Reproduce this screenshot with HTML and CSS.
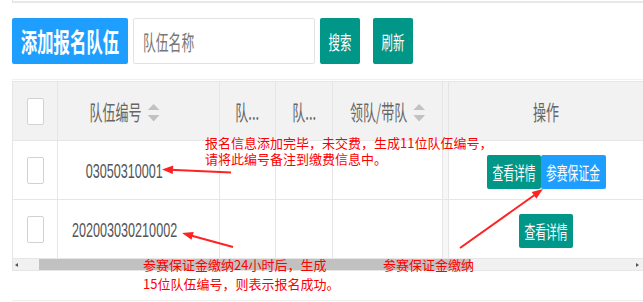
FILE: index.html
```html
<!DOCTYPE html>
<html lang="zh-CN">
<head>
    <meta charset="UTF-8">
    <title>报名队伍</title>
    <link rel="stylesheet" href="styles.css">
</head>
<body>
    <div class="page">
        <div class="top-rule"></div>

        <div class="toolbar">
            <button class="btn blue add"><span class="sq">添加报名队伍</span></button>
            <div class="search-box"><span class="sq">队伍名称</span></div>
            <button class="btn teal tool"><span class="sq">搜索</span></button>
            <button class="btn teal tool refresh"><span class="sq">刷新</span></button>
        </div>

        <div class="table">
            <div class="grid">
                <!-- 表头 -->
                <div class="cell head"><i class="cb"></i></div>
                <div class="cell head num">
                    <span class="sq">队伍编号<svg class="sort" viewBox="0 0 19 18"><path d="M0 6 9.5 0 19 6Z"/><path d="M0 11h19l-9.5 6.5Z"/></svg></span>
                </div>
                <div class="cell head"><span class="sq">队...</span></div>
                <div class="cell head"><span class="sq">队...</span></div>
                <div class="cell head">
                    <span class="sq">领队/带队<svg class="sort" viewBox="0 0 19 18"><path d="M0 6 9.5 0 19 6Z"/><path d="M0 11h19l-9.5 6.5Z"/></svg></span>
                </div>
                <div class="cell head ops"><span class="sq">操作</span></div>

                <!-- 第一行 -->
                <div class="cell"><i class="cb"></i></div>
                <div class="cell num"><span class="sq digits">03050310001</span></div>
                <div class="cell"></div>
                <div class="cell"></div>
                <div class="cell"></div>
                <div class="cell ops">
                    <button class="btn teal sm detail"><span class="sq">查看详情</span></button>
                    <button class="btn blue sm deposit"><span class="sq">参赛保证金</span></button>
                </div>

                <!-- 第二行 -->
                <div class="cell"><i class="cb"></i></div>
                <div class="cell num"><span class="sq digits">202003030210002</span></div>
                <div class="cell"></div>
                <div class="cell"></div>
                <div class="cell"></div>
                <div class="cell ops">
                    <button class="btn teal sm detail"><span class="sq">查看详情</span></button>
                </div>
            </div>

            <div class="hscroll">
                <div class="arrow-l"><i></i></div>
                <div class="thumb"></div>
                <div class="track"></div>
                <div class="arrow-r"><i></i></div>
            </div>
        </div>

        <div class="bottom-rule"></div>

        <!-- 标注 -->
        <div class="note note-1">报名信息添加完毕，未交费，生成11位队伍编号，<br>请将此编号备注到缴费信息中。</div>
        <div class="note note-2">参赛保证金缴纳24小时后，生成<br>15位队伍编号，则表示报名成功。</div>
        <div class="note note-3">参赛保证金缴纳</div>

        <svg class="arrows" viewBox="0 0 643 302">
            <line x1="231" y1="172.5" x2="170" y2="169.8"/>
            <polygon points="162,169.5 173.2,165.6 172.8,174"/>
            <line x1="233" y1="247" x2="190" y2="235.3"/>
            <polygon points="182,233 193.7,232 191.5,239.8"/>
            <line x1="460" y1="248" x2="536" y2="194"/>
            <polygon points="543,189 536.3,198.7 531.7,192.1"/>
        </svg>
    </div>
</body>
</html>
```

FILE: styles.css
```css
* {
    box-sizing: border-box;
}

body {
    margin: 0;
    background: #fff;
    font-family: "Noto Sans CJK SC", "Noto Sans", sans-serif;
    color: #666;
}

.page {
    position: relative;
    width: 643px;
    height: 302px;
    padding-left: 12px;
    overflow: hidden;
}

.top-rule {
    height: 3px;
    border-left: 1px solid #e2e2e2;
    border-bottom: 2px solid #e8e8e8;
}

/* 截图里界面文字被横向压扁，这里统一用 scaleX 还原 */
.sq {
    display: inline-block;
    flex-shrink: 0;
    white-space: nowrap;
    line-height: 1;
    transform: scaleX(.62);
}

.btn {
    display: flex;
    align-items: center;
    justify-content: center;
    padding: 0;
    border: 0;
    border-radius: 2px;
    color: #fff;
    font-family: inherit;
    overflow: visible;
}

.blue {
    background: #1e9fff;
}

.teal {
    background: #009688;
}

.toolbar {
    display: flex;
    height: 77px;
    padding: 15px 0;
    border-bottom: 1px solid #f0f0f0;
}

.add {
    width: 116px;
    font-size: 26px;
    font-weight: bold;
}

.add .sq {
    transform: scaleX(.63);
}

.search-box {
    display: flex;
    align-items: center;
    width: 182px;
    margin-left: 5px;
    padding-left: 9px;
    border: 1px solid #e2e2e2;
    border-radius: 2px;
    font-size: 21px;
    color: #777;
}

.search-box .sq {
    transform-origin: left center;
    transform: scaleX(.61);
}

.tool {
    width: 40px;
    margin-left: 5px;
    font-size: 19px;
}

.tool .sq {
    transform: scaleX(.6);
}

.refresh {
    margin-left: 13px;
}

.table {
    margin-top: 1px;
    border: 1px solid #e6e6e6;
    border-right: 0;
}

.grid {
    display: grid;
    grid-template-columns: 45px 162px 56px 57px 110px 1fr;
    grid-template-rows: 59px 59px 59px;
}

.cell {
    display: flex;
    align-items: center;
    justify-content: center;
    border-right: 1px solid #e6e6e6;
    border-bottom: 1px solid #e6e6e6;
    font-size: 21px;
}

.head {
    background: #f2f2f2;
}

.num {
    padding-right: 28px;
}

.digits {
    font-family: "Liberation Sans", Arial, sans-serif;
    color: #555;
    transform: scaleX(.6);
}

.ops {
    padding: 3px 0 0 6px;
    border-right: 0;
    box-shadow: inset 5px 0 0 #f7f7f7, inset 6px 0 0 #e6e6e6;
}

.head.ops {
    padding-top: 0;
    box-shadow: inset 5px 0 0 #f2f2f2, inset 6px 0 0 #e4e4e4;
}

.cb {
    display: block;
    width: 17px;
    height: 27px;
    background: #fff;
    border: 1px solid #d2d2d2;
    border-radius: 2px;
}

.sort {
    width: 19px;
    height: 18px;
    margin-left: 10px;
    vertical-align: -2px;
    fill: #c2c2c2;
}

.sm {
    height: 34px;
    font-size: 18px;
}

.sm .sq {
    transform: scaleX(.6);
}

.detail {
    width: 54px;
}

.deposit {
    width: 65px;
}

.hscroll {
    display: flex;
    height: 11px;
    background: #f1f1f1;
}

.arrow-l,
.arrow-r {
    display: flex;
    align-items: center;
}

.arrow-l {
    width: 26px;
    padding-left: 2px;
}

.arrow-l i {
    border-right: 3px solid #555;
    border-top: 2px solid transparent;
    border-bottom: 2px solid transparent;
}

.arrow-r {
    width: 7px;
}

.arrow-r i {
    border-left: 3px solid #555;
    border-top: 2px solid transparent;
    border-bottom: 2px solid transparent;
}

.thumb {
    width: 432px;
    background: #c1c1c1;
}

.track {
    flex: 1;
}

.bottom-rule {
    margin-top: 29px;
    border-top: 1px solid #eee;
}

.note {
    position: absolute;
    color: #f00;
    font-size: 13px;
    line-height: 16px;
    white-space: nowrap;
}

.note-1 {
    left: 205px;
    top: 135px;
}

.note-2 {
    left: 143px;
    top: 255px;
    line-height: 19px;
}

.note-3 {
    left: 383px;
    top: 255px;
    line-height: 19px;
}

.arrows {
    position: absolute;
    left: 0;
    top: 0;
    width: 643px;
    height: 302px;
    pointer-events: none;
}

.arrows line {
    stroke: #f22;
    stroke-width: 2;
}

.arrows polygon {
    fill: #f22;
}
```
